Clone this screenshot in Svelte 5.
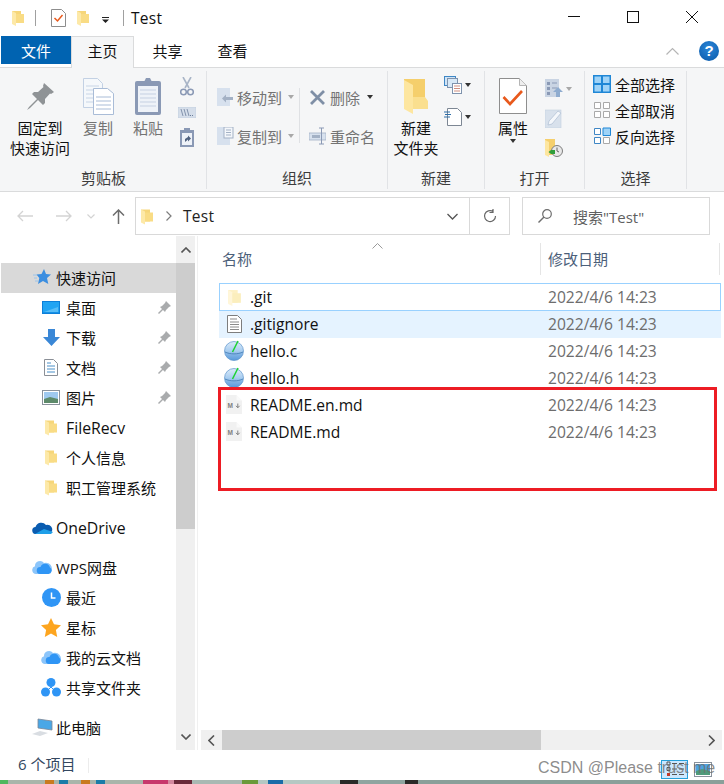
<script>
  const quick = [
    { icon: 'desktop', label: '桌面', pin: true },
    { icon: 'download', label: '下载', pin: true },
    { icon: 'doc', label: '文档', pin: true },
    { icon: 'picture', label: '图片', pin: true },
    { icon: 'folder', label: 'FileRecv', latin: true },
    { icon: 'folder', label: '个人信息' },
    { icon: 'folder', label: '职工管理系统' },
  ]
  const wps = [
    { icon: 'clock', label: '最近' },
    { icon: 'star', label: '星标' },
    { icon: 'wpscloud', label: '我的云文档' },
    { icon: 'share', label: '共享文件夹' },
  ]
  const files = [
    { name: '.git', icon: 'folderpale', cls: 'focused' },
    { name: '.gitignore', icon: 'text', cls: 'hovered' },
    { name: 'hello.c', icon: 'globe' },
    { name: 'hello.h', icon: 'globe' },
    { name: 'README.en.md', icon: 'md' },
    { name: 'README.md', icon: 'md' },
  ]
</script>

{#snippet folder(w, h, pale = false)}
  <svg width={w} height={h} viewBox="0 0 12 16">
    <path d="M0 1h9v12H0z" fill={pale ? '#fdf0c4' : '#f6d67a'} />
    <path d="M0 1l4 2v13l-4-2z" fill={pale ? '#fff6da' : '#fde9a8'} />
    <path d="M4 4h8v9H4z" fill={pale ? '#fbeebd' : '#f9dc85'} />
  </svg>
{/snippet}

{#snippet pinIcon()}
  <svg width="13" height="13" viewBox="0 0 13 13">
    <path d="M8 0l5 5-2 1-3 3-1 2-2-2-4 4-1-1 4-4-2-2 2-1 3-3z" fill="#a9abad" />
  </svg>
{/snippet}

{#snippet icon(name)}
  {#if name === 'folder'}
    {@render folder(12, 17)}
  {:else if name === 'folderpale'}
    {@render folder(13, 17, true)}
  {:else if name === 'star2'}
    <svg width="18" height="18" viewBox="0 0 18 18"><path d="M11 1l2 5 5 .5-4 3.500 1.300 6L10 13l-5 3 1.300-6-2.800-3.500 5-.5z" fill="#3b8ee0" /><path d="M0 7h4M1 10h3M2 13h3" stroke="#9cc4ea" /></svg>
  {:else if name === 'desktop'}
    <svg width="18" height="13" viewBox="0 0 18 13"><rect width="18" height="13" fill="#0c7fd9" /><rect x="1" y="1" width="16" height="10.500" fill="#21a4f3" /><path d="M2 11L16 6v5z" fill="#58bdf7" /></svg>
  {:else if name === 'download'}
    <svg width="17" height="17" viewBox="0 0 17 17"><path d="M5 0h7v8h5l-8.500 9L0 8h5z" fill="#3a87d6" /></svg>
  {:else if name === 'doc'}
    <svg width="14" height="17" viewBox="0 0 14 17"><path d="M.5.500h9l4 4v12H.5z" fill="#fff" stroke="#8a8f96" /><path d="M3 4h4M3 7h8M3 10h8M3 13h8" stroke="#4b90c8" /></svg>
  {:else if name === 'picture'}
    <svg width="18" height="15" viewBox="0 0 18 15"><rect x=".5" y=".5" width="17" height="14" fill="#fff" stroke="#8a929c" /><rect x="2" y="2" width="14" height="11" fill="#9fc9ef" /><path d="M2 9l6-2 8 2v4H2z" fill="#5d8a6a" /></svg>
  {:else if name === 'clock'}
    <svg width="19" height="19" viewBox="0 0 19 19"><circle cx="9.500" cy="9.500" r="9.500" fill="#2f95f5" /><path d="M9.500 4.500v5.500h4" fill="none" stroke="#fff" stroke-width="1.500" /></svg>
  {:else if name === 'star'}
    <svg width="20" height="19" viewBox="0 0 20 19"><path d="M10 0l3 6.300 7 .9-5.100 4.800 1.300 7L10 15.600 3.800 19l1.300-7L0 7.200l7-.9z" fill="#fda51f" /></svg>
  {:else if name === 'wpscloud'}
    <svg width="20" height="14" viewBox="0 0 20 14"><path d="M4 14a4 4 0 0 1-1-7.800A5 5 0 0 1 12 3a4.500 4.500 0 0 1 4 11z" fill="#8cc5fa" /><path d="M8 14a3.500 3.500 0 0 1 .5-7A5 5 0 0 1 18 7.500 3.500 3.500 0 0 1 16.500 14z" fill="#2f95f5" /></svg>
  {:else if name === 'share'}
    <svg width="20" height="19" viewBox="0 0 20 19"><circle cx="10" cy="4.500" r="4.500" fill="#2f95f5" /><circle cx="4.500" cy="14" r="4.500" fill="#2f95f5" /><circle cx="15.500" cy="14" r="4.500" fill="#2f95f5" /><path d="M10 9l-3 3M10 9l3 3" stroke="#2f95f5" /></svg>
  {:else if name === 'text'}
    <svg width="15" height="18" viewBox="0 0 15 18"><path d="M.5.500h10l4 4v13H.5z" fill="#fff" stroke="#7d7d7d" /><path d="M3 4h7M3 7h9M3 9.500h9M3 12h9M3 14.500h9" stroke="#8a8a8a" /></svg>
  {:else if name === 'globe'}
    <svg width="20" height="21" viewBox="0 0 20 21"><defs><linearGradient id="gl" x1="0" y1="0" x2="0" y2="1"><stop offset="0" stop-color="#dcebf9" /><stop offset=".5" stop-color="#a8cdf0" /><stop offset=".7" stop-color="#7fb2e4" /><stop offset="1" stop-color="#5a9adb" /></linearGradient></defs><circle cx="10" cy="11" r="9.500" fill="url(#gl)" stroke="#5b93cb" stroke-width=".7" /><path d="M1 12c5 2.500 13 2.500 18 0" fill="none" stroke="#3f78b3" stroke-width=".8" /><path d="M8.500 12L14 1" stroke="#1ed334" stroke-width="1.600" /></svg>
  {:else if name === 'md'}
    <svg width="16" height="19" viewBox="0 0 16 19"><path d="M0 0h10.500L16 5.500V19H0z" fill="#f1f1f1" /><path d="M10.500 0v5.500H16z" fill="#fafafa" /><text x="1.500" y="13" font-size="6.500" font-weight="700" font-family="Liberation Sans" fill="#808080">M</text><path d="M11.800 8.500v4M10 10.800l1.800 2 1.800-2" fill="none" stroke="#808080" stroke-width="1" /></svg>
  {/if}
{/snippet}

<div class="window">
  <header class="titlebar">
    <span class="qa first">{@render folder(12, 16)}</span>
    <i class="vsep"></i>
    <svg class="qa doccheck" width="15" height="18" viewBox="0 0 15 18"><path d="M.5.500h10l4 4v13H.5z" fill="#fff" stroke="#8d8d8d" /><path d="M3.500 9l3 3 5-6" fill="none" stroke="#e8591c" stroke-width="1.500" /></svg>
    <span class="qa second">{@render folder(12, 16)}</span>
    <svg class="qa more" width="7" height="6" viewBox="0 0 7 6"><path d="M0 0h7v1H0zM0 2.500h7L3.500 6z" fill="#222" /></svg>
    <i class="vsep last"></i>
    <span class="title">Test</span>
    <div class="controls">
      <svg width="12" height="12" viewBox="0 0 12 12"><path d="M0 5.500h12" stroke="#111" /></svg>
      <svg width="12" height="12" viewBox="0 0 12 12"><rect x=".5" y=".5" width="11" height="11" fill="none" stroke="#111" /></svg>
      <svg width="12" height="12" viewBox="0 0 12 12"><path d="M0 0l12 12M12 0L0 12" stroke="#111" /></svg>
    </div>
  </header>

  <nav class="tabs">
    <span class="tab file">文件</span>
    <span class="tab active">主页</span>
    <span class="tab plain">共享</span>
    <span class="tab">查看</span>
    <div class="tabs-right">
      <svg width="13" height="8" viewBox="0 0 13 8"><path d="M.5 7.500l6-6 6 6" fill="none" stroke="#b5b5b5" stroke-width="1.200" /></svg>
      <span class="help">?</span>
    </div>
  </nav>

  <section class="ribbon">
    <div class="group clip">
      <div class="tools">
        <div class="big pinbtn">
          <div class="big-icon">
            <svg width="27" height="27" viewBox="0 0 27 27"><path d="M17 0l10 9-3 2-1-.5-5 5.500 0 4-2 2-5-5-8 8-3 2 2-3 8-8-5-5 2-2h4l5.500-5-.5-1z" fill="#8f9396" /></svg>
          </div>
          <span>固定到</span><span>快速访问</span>
        </div>
        <div class="big copybtn dim">
          <div class="big-icon">
            <svg width="31" height="37" viewBox="0 0 31 37"><path d="M.5.500h14l5 5v24H.5z" fill="#f5f8fb" stroke="#c3d1e4" /><path d="M3 8h13M3 12h13M3 16h13M3 20h13M3 24h13" stroke="#c8d5e6" /><path d="M10.500 10.500h14l6 5v21h-20z" fill="#fff" stroke="#a9bcd7" /><path d="M13 19h15M13 23h15M13 27h15M13 31h15" stroke="#a9bcd7" /></svg>
          </div>
          <span>复制</span>
        </div>
        <div class="big pastebtn dim">
          <div class="big-icon">
            <svg width="27" height="38" viewBox="0 0 27 38"><rect y="4" width="26" height="34" rx="2" fill="#8a99b5" /><rect x="3" y="9" width="20" height="26" fill="#eef2f8" /><path d="M5 13h16M5 17h16M5 21h16M5 25h16M5 29h16" stroke="#c5d0e2" /><path d="M9 5l2-4h4l2 4 2 3H7z" fill="#8a99b5" /></svg>
          </div>
          <span>粘贴</span>
        </div>
        <div class="smallcol">
          <svg width="14" height="19" viewBox="0 0 14 19"><path d="M3 0l6 11M11 0L5 11" stroke="#a9b5c7" stroke-width="1.600" /><circle cx="3.500" cy="15" r="2.800" fill="none" stroke="#8a99b5" stroke-width="1.500" /><circle cx="10.500" cy="15" r="2.800" fill="none" stroke="#8a99b5" stroke-width="1.500" /></svg>
          <svg width="18" height="11" viewBox="0 0 18 11"><rect width="18" height="11" fill="#d5deea" stroke="#b8c5d8" stroke-width=".5" /><path d="M3 2l2 7M6 2l2 7M9 2l2 7" stroke="#6d7f9c" stroke-width=".8" /><path d="M12 8.500h1M14 8.500h1" stroke="#6d7f9c" /></svg>
          <svg width="14" height="19" viewBox="0 0 14 19"><rect y="2" width="14" height="17" fill="#8a99b5" /><rect x="2" y="5" width="10" height="12" fill="#eef2f8" /><path d="M4 0h6v4H4z" fill="#8a99b5" /><path d="M5 14l0-3 3-2v-1.500l3 3-3 3v-2z" fill="#50627f" /></svg>
        </div>
      </div>
      <div class="glabel">剪贴板</div>
    </div>

    <div class="group org">
      <div class="tools">
        <div class="orgcol dim">
          <div class="row">
            <svg width="17" height="18" viewBox="0 0 17 18"><path d="M0 0h13v18H0z" fill="#d7e1ee" /><path d="M16 9H9V6.500L5 10.500l4 4V12h7z" fill="#a3b1c5" /></svg>
            <span>移动到</span><i class="drop grey"></i>
          </div>
          <div class="row">
            <svg width="17" height="18" viewBox="0 0 17 18"><path d="M0 0h13v18H0z" fill="#d7e1ee" /><rect x="7" y="0" width="9" height="11" fill="#f4f7fb" stroke="#a3b1c5" /><path d="M9 3h5M9 5.500h5M9 8h5" stroke="#a3b1c5" /></svg>
            <span>复制到</span><i class="drop grey"></i>
          </div>
        </div>
        <i class="orgsep"></i>
        <div class="orgcol dim second">
          <div class="row">
            <svg width="16" height="15" viewBox="0 0 16 15"><path d="M1.500 1l13 13M14.500 1l-13 13" stroke="#7f8fa6" stroke-width="2.800" /></svg>
            <span>删除</span><i class="drop dark"></i>
          </div>
          <div class="row">
            <svg width="17" height="18" viewBox="0 0 17 18"><rect y="6" width="17" height="7" fill="#d7e1ee" stroke="#a3b1c5" stroke-width=".8" /><rect x="3" y="8" width="8" height="3" fill="#a3b1c5" /><path d="M10 1h5M12.500 1v16M10 17h5" stroke="#8a99b5" /></svg>
            <span>重命名</span>
          </div>
        </div>
      </div>
      <div class="glabel">组织</div>
    </div>

    <div class="group newg">
      <div class="tools">
        <div class="big newbtn">
          <div class="big-icon">
            <svg width="24" height="35" viewBox="0 0 24 35"><path d="M0 0h21v30H0z" fill="#f5cf6c" /><path d="M0 1l9 5v29l-9-5z" fill="#fde6a0" /><path d="M9 18h12l3 4v8H9z" fill="#fadf8f" /></svg>
          </div>
          <span>新建</span><span>文件夹</span>
        </div>
        <div class="smallcol newsmall">
          <div class="withdrop">
            <svg width="18" height="18" viewBox="0 0 18 18"><rect x=".5" y=".5" width="11" height="9" fill="#cfe4f7" stroke="#3f87c5" /><rect x="3.500" y="2.500" width="10" height="9" fill="#d8e9f7" stroke="#7f93ad" /><rect x="8.500" y="7.500" width="9" height="10" fill="#fff" stroke="#7f93ad" /><path d="M10 10h6M10 12.500h6M10 15h6" stroke="#cf8f80" /></svg>
            <i class="drop dark"></i>
          </div>
          <div class="withdrop">
            <svg width="18" height="18" viewBox="0 0 18 18"><path d="M3.500.500h10l4 4v13h-14z" fill="#fff" stroke="#7d8794" /><path d="M0 4h6M1 6.500h6M0 9h6" stroke="#2f6fa8" /></svg>
            <i class="drop dark"></i>
          </div>
        </div>
      </div>
      <div class="glabel">新建</div>
    </div>

    <div class="group open">
      <div class="tools">
        <div class="big propbtn">
          <div class="big-icon">
            <svg width="28" height="36" viewBox="0 0 28 36"><path d="M.5.500h20l7 7v28H.5z" fill="#fff" stroke="#8e8e8e" /><path d="M20.500.500v7h7" fill="#eee" stroke="#b5b5b5" /><path d="M4.500 19l6.500 7 12-13" fill="none" stroke="#e8591c" stroke-width="2.600" /></svg>
          </div>
          <span>属性</span><i class="drop dark"></i>
        </div>
        <div class="smallcol opensmall">
          <div class="withdrop">
            <svg width="18" height="19" viewBox="0 0 18 19"><rect width="14" height="18" fill="#c9d4e3" /><path d="M2 3h3v3H2zM2 8h3v3H2zM2 13h3v3H2z" fill="#8a99b5" /><path d="M7 4h5M7 9h5" stroke="#8a99b5" /><path d="M13 8l5 5h-3v5h-4v-5H8z" fill="#8faccf" /></svg>
            <i class="drop grey"></i>
          </div>
          <svg width="18" height="19" viewBox="0 0 18 19"><rect width="16" height="18" y="1" fill="#d8e1ec" stroke="#c2cfdf" stroke-width=".6" /><path d="M3 16l1-4L13 2l3 2L7 15z" fill="#f4f7fb" stroke="#b4c3d6" stroke-width=".8" /></svg>
          <svg width="18" height="18" viewBox="0 0 18 18"><path d="M0 0h10v16H0z" fill="#f5cf6c" /><path d="M0 1l4 2v15l-4-2z" fill="#fde6a0" /><circle cx="12" cy="12" r="5.500" fill="#e8e8e8" stroke="#7d7d7d" /><path d="M12 8.500V12l2 1" fill="none" stroke="#666" /><path d="M10 11H6l-2.500 2L6 15h4z" fill="#2f9e3b" /></svg>
        </div>
      </div>
      <div class="glabel">打开</div>
    </div>

    <div class="group sel">
      <div class="tools">
        <div class="selcol">
          <div class="selrow">
            <svg width="18" height="18" viewBox="0 0 18 18"><path d="M0 0h18v18H0z" fill="#1f87d6" /><path d="M1.500 1.500h6.500v6.500H1.500zM10 1.500h6.500v6.500H10zM1.500 10h6.500v6.500H1.500zM10 10h6.500v6.500H10z" fill="#9fd3f7" /></svg>
            <span>全部选择</span>
          </div>
          <div class="selrow">
            <svg width="18" height="18" viewBox="0 0 18 18"><path d="M1.500 1.500h6v6h-6zM10.500 1.500h6v6h-6zM1.500 10.500h6v6h-6zM10.500 10.500h6v6h-6z" fill="#fff" stroke="#a9a9a9" /></svg>
            <span>全部取消</span>
          </div>
          <div class="selrow">
            <svg width="18" height="18" viewBox="0 0 18 18"><path d="M1.500 1.500h6v6h-6zM1.500 10.500h6v6h-6z" fill="#fff" stroke="#3f87c5" /><path d="M10 1h7.500v7.500H10z" fill="#9fd3f7" stroke="#1f87d6" /><path d="M10.500 10.500h6v6h-6z" fill="#fff" stroke="#a9a9a9" /></svg>
            <span>反向选择</span>
          </div>
        </div>
      </div>
      <div class="glabel">选择</div>
    </div>
  </section>

  <div class="addressbar">
    <svg class="nav back" width="16" height="12" viewBox="0 0 16 12"><path d="M16 6H1M6 1L1 6l5 5" fill="none" stroke="#d3d3d3" stroke-width="1.300" /></svg>
    <svg class="nav fwd" width="16" height="12" viewBox="0 0 16 12"><path d="M0 6h15M10 1l5 5-5 5" fill="none" stroke="#d3d3d3" stroke-width="1.300" /></svg>
    <svg class="nav down" width="8" height="5" viewBox="0 0 8 5"><path d="M.5.500L4 4 7.500.500" fill="none" stroke="#d3d3d3" stroke-width="1.200" /></svg>
    <svg class="nav up" width="13" height="15" viewBox="0 0 13 15"><path d="M6.500 15V1M1 6.500l5.500-5.500L12 6.500" fill="none" stroke="#6d6d6d" stroke-width="1.500" /></svg>
    <div class="pathbox">
      <span class="pf">{@render folder(12, 17)}</span>
      <svg width="6" height="10" viewBox="0 0 6 10"><path d="M.5.500L5 5 .5 9.500" fill="none" stroke="#7d7d7d" stroke-width="1.200" /></svg>
      <span class="crumb">Test</span>
      <svg class="chev" width="11" height="7" viewBox="0 0 11 7"><path d="M.5 1l5 5 5-5" fill="none" stroke="#555" stroke-width="1.300" /></svg>
      <div class="refresh">
        <svg width="14" height="14" viewBox="0 0 14 14"><path d="M12.500 7A5.500 5.500 0 1 1 10 2.500M10 0v3.500H6.500" fill="none" stroke="#666" stroke-width="1.200" /></svg>
      </div>
    </div>
    <div class="search">
      <svg width="14" height="14" viewBox="0 0 14 14"><circle cx="9" cy="5" r="4.300" fill="none" stroke="#6d6d6d" stroke-width="1.200" /><path d="M6 8l-5.500 5.500" stroke="#6d6d6d" stroke-width="1.400" /></svg>
      <span>搜索"Test"</span>
    </div>
  </div>

  <main class="body">
    <aside class="side">
      <div class="tree">
        <div class="item l1 current">
          <span class="ic">{@render icon('star2')}</span><span>快速访问</span>
        </div>
        {#each quick as q}
          <div class="item l2">
            <span class="ic">{@render icon(q.icon)}</span><span class:latin={q.latin}>{q.label}</span>
            {#if q.pin}<span class="pin">{@render pinIcon()}</span>{/if}
          </div>
        {/each}
        <div class="item l1 gap">
          <span class="ic">
            <svg width="21" height="13" viewBox="0 0 21 13"><path d="M4 13a3.500 3.500 0 0 1-.5-7A6 6 0 0 1 14 4a4.500 4.500 0 0 1 3 9z" fill="#0a5cb0" /><path d="M3 13l9-5 9 3-2 2z" fill="#1f9fe8" /></svg>
          </span><span class="latin">OneDrive</span>
        </div>
        <div class="item l1 gap">
          <span class="ic">{@render icon('wpscloud')}</span><span>WPS网盘</span>
        </div>
        {#each wps as w}
          <div class="item l2">
            <span class="ic">{@render icon(w.icon)}</span><span>{w.label}</span>
          </div>
        {/each}
        <div class="item l1 gap">
          <span class="ic">
            <svg width="21" height="18" viewBox="0 0 21 18"><path d="M6 1l14 2v9L6 10z" fill="#4aa7e6" stroke="#7d8794" stroke-width=".8" /><path d="M0 16l8-3 8 2-8 3z" fill="#d9dde2" /></svg>
          </span><span>此电脑</span>
        </div>
        <div class="item l1 gap peek">
          <span class="ic"><svg width="18" height="16" viewBox="0 0 18 16"><circle cx="9" cy="8" r="7" fill="#6cc4ef" /></svg></span>
        </div>
      </div>
      <div class="vscroll">
        <div class="sbtn"><svg width="10" height="6" viewBox="0 0 10 6"><path d="M.5 5.500L5 1l4.500 4.500" fill="none" stroke="#555" stroke-width="1.600" /></svg></div>
        <div class="vtrack"><div class="vthumb"></div></div>
        <div class="sbtn"><svg width="10" height="6" viewBox="0 0 10 6"><path d="M.5.500L5 5 9.500.500" fill="none" stroke="#555" stroke-width="1.600" /></svg></div>
      </div>
    </aside>

    <section class="list">
      <div class="listhead">
        <svg class="sort" width="11" height="6" viewBox="0 0 11 6"><path d="M.5 5.500l5-5 5 5" fill="none" stroke="#9a9a9a" /></svg>
        <span class="hname">名称</span>
        <span class="hdate">修改日期</span>
      </div>
      <div class="rows">
        {#each files as f}
          <div class="frow {f.cls ?? ''}">
            <span class="fic">{@render icon(f.icon)}</span>
            <span class="fname">{f.name}</span>
            <span class="fdate">2022/4/6 14:23</span>
          </div>
        {/each}
      </div>
      <div class="hscroll">
        <div class="hbtn"><svg width="7" height="11" viewBox="0 0 7 11"><path d="M6 .5L1 5.500l5 5" fill="none" stroke="#555" stroke-width="1.600" /></svg></div>
        <div class="hthumb"></div>
        <div class="hbtn right"><svg width="7" height="11" viewBox="0 0 7 11"><path d="M1 .5l5 5-5 5" fill="none" stroke="#555" stroke-width="1.600" /></svg></div>
      </div>
    </section>
  </main>

  <footer class="status">
    <span class="count">6 个项目</span>
    <i class="statsep"></i>
    <div class="views">
      <div class="view on">
        <svg width="18" height="16" viewBox="0 0 18 16"><path d="M1 1h3v3H1zM1 6.500h3v3H1z" fill="none" stroke="#555" /><rect x="1" y="12" width="3" height="3" fill="#c0392b" /><path d="M6 2.500h5M13 2.500h5M6 8h5M13 8h5M6 13.500h5M13 13.500h5" stroke="#555" /></svg>
      </div>
      <div class="view">
        <svg width="18" height="15" viewBox="0 0 18 15"><rect x=".5" y=".5" width="17" height="14" fill="#fff" stroke="#8a929c" /><rect x="2" y="2" width="14" height="11" fill="#4da3e0" /><path d="M2 9l6-2 8 2v4H2z" fill="#4f9a7a" /></svg>
      </div>
    </div>
  </footer>
  <div class="desktop"></div>

  <div class="annotation"></div>
  <div class="watermark">CSDN @Please trust me</div>
</div>

<style>
  :global(body) {
    margin: 0;
    background: #fff;
  }

  .window {
    position: relative;
    width: 724px;
    height: 784px;
    overflow: hidden;
    background: #fff;
    font-family: "Open Sans", "Noto Sans CJK SC", sans-serif;
    font-size: 15px;
    color: #111;
    display: flex;
    flex-direction: column;
  }
  .latin { font-size: 15.8px; margin-top: 2px; }

  /* title bar */
  .titlebar {
    height: 36px;
    display: flex;
    align-items: center;
    flex: none;
  }
  .qa {
    display: flex;
    flex: none;
  }
  .first { margin-left: 12px; }
  .vsep {
    width: 1px;
    height: 16px;
    background: #a0a0a0;
    margin-left: 11px;
  }
  .vsep.last { margin-left: 14px; }
  .doccheck { margin-left: 15px; }
  .second { margin-left: 11px; }
  .more { margin-left: 13px; margin-top: 3px; }
  .title {
    margin-left: 7px;
    margin-top: -1px;
    font-size: 15.5px;
    letter-spacing: 0.3px;
  }
  .controls {
    margin-left: auto;
    margin-right: 26px;
    display: flex;
    gap: 47px;
    margin-top: -3px;
  }

  /* tabs */
  .tabs {
    height: 32px;
    flex: none;
    display: flex;
    box-sizing: border-box;
    border-bottom: 1px solid #dadbdc;
    padding-left: 1px;
    align-items: flex-start;
  }
  .tab {
    width: 65px;
    height: 28px;
    line-height: 30px;
    text-align: center;
  }
  .tab.plain { margin-left: 1px; }
  .tab.file {
    width: 70px;
    background: #0063b1;
    color: #fff;
  }
  .tab.active {
    width: 63px;
    height: 32px;
    box-sizing: border-box;
    background: #f5f6f7;
    border: 1px solid #dadbdc;
    border-bottom: none;
    position: relative;
    z-index: 1;
    line-height: 29px;
  }
  .tabs-right {
    margin-left: auto;
    margin-right: 5px;
    display: flex;
    align-items: center;
    gap: 20px;
    height: 30px;
  }
  .help {
    width: 20px;
    height: 20px;
    border-radius: 50%;
    background: radial-gradient(circle at 50% 35%, #2a86d8, #0a58a8);
    color: #fff;
    font: 700 15px/20px "Liberation Sans", sans-serif;
    text-align: center;
  }

  /* ribbon */
  .ribbon {
    height: 124px;
    flex: none;
    box-sizing: border-box;
    background: #f5f6f7;
    border-bottom: 1px solid #dadbdc;
    display: flex;
    padding: 3px 0 0 1px;
  }
  .group {
    display: flex;
    flex-direction: column;
    box-sizing: border-box;
    border-right: 1px solid #e1e3e6;
    height: 118px;
  }
  .clip { width: 206px; }
  .org { width: 181px; }
  .newg { width: 97px; }
  .open { width: 100px; }
  .sel { width: 102px; }
  .tools {
    flex: 1;
    display: flex;
    min-height: 0;
  }
  .glabel {
    height: 20px;
    text-align: center;
    color: #3c3c3c;
    line-height: 18px;
  }
  .big {
    display: flex;
    flex-direction: column;
    align-items: center;
    line-height: 20px;
    padding-top: 3px;
    flex: none;
  }
  .big-icon {
    height: 44px;
    display: flex;
    align-items: center;
    justify-content: center;
  }
  .dim, .dim span { color: #737373; }
  .pinbtn { width: 64px; margin-left: 7px; }
  .copybtn { width: 50px; margin-left: 1px; }
  .pastebtn { width: 50px; }
  .smallcol {
    display: flex;
    flex-direction: column;
    align-items: center;
    justify-content: space-between;
    flex: none;
  }
  .clip .smallcol {
    width: 18px;
    margin-left: 5px;
    padding-top: 6px;
    height: 70px;
  }
  .orgcol {
    display: flex;
    flex-direction: column;
    padding-top: 16px;
    gap: 19px;
    margin-left: 10px;
    width: 84px;
  }
  .row {
    height: 20px;
    display: flex;
    align-items: center;
    gap: 3px;
    white-space: nowrap;
  }
  .orgcol.second { margin-left: 9px; }
  .orgcol.second .row { gap: 4px; }
  .orgcol.second .row svg { flex: none; width: 17px; }
  .orgsep {
    width: 1px;
    height: 55px;
    margin-top: 17px;
    margin-left: 4px;
    background: #dfe1e4;
  }
  .drop {
    display: block;
    width: 0;
    height: 0;
    border-left: 3.500px solid transparent;
    border-right: 3.500px solid transparent;
    border-top: 4px solid #a8a8a8;
    margin-left: 3px;
  }
  .drop.dark { border-top-color: #333; }

  .newbtn { width: 56px; }
  .newsmall {
    margin-left: 0;
    padding-top: 5px;
    height: 50px;
  }
  .withdrop {
    display: flex;
    align-items: center;
    gap: 0;
  }
  .propbtn { width: 56px; }
  .propbtn .drop { margin: 1px 0 0; }
  .opensmall {
    margin-left: 4px;
    width: 30px;
    align-items: flex-start;
    padding-top: 8px;
    height: 78px;
  }
  .selcol {
    display: flex;
    flex-direction: column;
    gap: 8px;
    padding: 4px 0 0 8px;
  }
  .selrow {
    height: 18px;
    display: flex;
    align-items: center;
    gap: 4px;
    white-space: nowrap;
  }

  /* address bar */
  .addressbar {
    height: 44px;
    flex: none;
    display: flex;
    align-items: center;
    box-sizing: border-box;
    padding-top: 4px;
  }
  .nav { flex: none; }
  .back { margin-left: 17px; }
  .fwd { margin-left: 23px; }
  .down { margin-left: 15px; }
  .up { margin-left: 17px; }
  .pathbox {
    margin-left: 10px;
    width: 375px;
    height: 38px;
    box-sizing: border-box;
    border: 1px solid #d9d9d9;
    display: flex;
    align-items: center;
  }
  .pf { display: flex; margin-left: 5px; margin-right: 13px; }
  .crumb {
    margin-left: 11px;
    font-size: 15.5px;
    letter-spacing: 0.3px;
    color: #222;
  }
  .chev { margin-left: auto; margin-right: 11px; }
  .refresh {
    width: 39px;
    height: 36px;
    border-left: 1px solid #d9d9d9;
    display: flex;
    align-items: center;
    justify-content: center;
  }
  .search {
    margin-left: 12px;
    width: 188px;
    height: 38px;
    box-sizing: border-box;
    border: 1px solid #d9d9d9;
    display: flex;
    align-items: center;
    padding-left: 15px;
    gap: 21px;
    color: #5f5f5f;
  }

  /* main */
  .body {
    height: 514px;
    flex: none;
    display: flex;
  }
  .side {
    width: 198px;
    flex: none;
    display: flex;
    box-sizing: border-box;
    border-right: 1px solid #f0f0f0;
    margin-right: 3px;
  }
  .tree {
    width: 176px;
    flex: none;
    overflow: hidden;
    padding-top: 27px;
    box-sizing: border-box;
    height: 514px;
  }
  .item {
    height: 30px;
    display: flex;
    align-items: center;
    white-space: nowrap;
    position: relative;
    box-sizing: border-box;
    padding-bottom: 2px;
  }
  .item .ic {
    width: 22px;
    display: flex;
    justify-content: center;
    flex: none;
    margin-right: 3px;
  }
  .l1 { padding-left: 31px; }
  .l2 { padding-left: 40px; }
  .l2 .ic { margin-right: 4px; }
  .l1.gap { margin-top: 10px; }
  .peek { align-items: flex-start; padding-top: 4px; }
  .current {
    background: #d9d9d9;
    margin-left: 1px;
    padding-left: 30px;
  }
  .pin {
    position: absolute;
    left: 158px;
    top: 8px;
    display: flex;
  }
  .vscroll {
    width: 19px;
    flex: none;
    margin-right: 2px;
    display: flex;
    flex-direction: column;
    background: #f0f0f0;
  }
  .sbtn {
    height: 27px;
    display: flex;
    align-items: center;
    justify-content: center;
    flex: none;
  }
  .vtrack { flex: 1; }
  .vthumb {
    height: 266px;
    background: #cdcdcd;
  }

  .list {
    flex: 1;
    min-width: 0;
    display: flex;
    flex-direction: column;
  }
  .listhead {
    height: 47px;
    flex: none;
    position: relative;
    display: flex;
    color: #4c607a;
    box-sizing: border-box;
    padding-left: 21px;
  }
  .listhead::after {
    content: "";
    position: absolute;
    left: 518px;
    top: 7px;
    width: 1px;
    height: 32px;
    background: #e5e5e5;
  }
  .hname {
    width: 318px;
    line-height: 46px;
    flex: none;
  }
  .sort {
    position: absolute;
    left: 171px;
    top: 7px;
  }
  .hdate {
    border-left: 1px solid #e5e5e5;
    height: 32px;
    margin-top: 7px;
    line-height: 32px;
    padding-left: 7px;
  }
  .rows {
    flex: 1;
    padding-left: 18px;
    min-height: 0;
  }
  .frow {
    width: 502px;
    height: 27px;
    display: flex;
    align-items: center;
    box-sizing: border-box;
    border: 1px solid transparent;
    padding-bottom: 2px;
  }
  .frow.focused {
    border-color: #99d1ff;
    height: 28px;
    padding-bottom: 0;
  }
  .frow.hovered { background: #e5f3ff; border-color: #e5f3ff; }
  .fic {
    width: 28px;
    margin-right: 2px;
    display: flex;
    justify-content: center;
    flex: none;
  }
  .fname {
    width: 298px;
    flex: none;
    white-space: nowrap;
    color: #111;
    font-size: 15.6px;
  }
  .fdate {
    color: #6d6d6d;
    font-size: 15.6px;
    white-space: nowrap;
  }
  .hscroll {
    height: 20px;
    flex: none;
    display: flex;
    background: #f0f0f0;
    width: 521px;
  }
  .hbtn {
    width: 21px;
    display: flex;
    align-items: center;
    justify-content: center;
    flex: none;
  }
  .hbtn.right { margin-left: auto; }
  .hthumb {
    width: 319px;
    background: #cdcdcd;
  }

  /* status */
  .status {
    height: 30px;
    flex: none;
    display: flex;
    align-items: center;
    color: #33475f;
    padding-left: 18px;
    box-sizing: border-box;
  }
  .count { width: 70px; margin-top: -3px; }
  .statsep {
    width: 1px;
    height: 15px;
    background: #ececec;
  }
  .views {
    margin-left: auto;
    margin-right: 12px;
    display: flex;
    align-items: center;
    gap: 6px;
    padding-top: 8px;
  }
  .view {
    width: 18px;
    height: 19px;
    display: flex;
    align-items: center;
    justify-content: center;
  }
  .view.on {
    width: 27px;
    box-sizing: border-box;
    background: #cce8ff;
    border: 1px solid #26a0da;
  }
  .desktop {
    flex: 1;
    background: linear-gradient(90deg, #4fb85f 0 8px, #a9b5aa 8px 45px, #c97a1f 45px 54px, #a9b5aa 54px 59px, #1a7ca8 59px 68px, #a9b5aa 68px 81px, #c97a1f 81px 90px, #a9b5aa 90px 96px, #1a7ca8 96px 105px, #a9b5aa 105px 143px, #c8386c 143px 168px, #d58aa0 168px 174px, #6a2a3a 174px 192px, #a9b9b3 192px 242px, #6a9a3a 242px 258px, #b5c8c3 258px 268px, #1a6ca8 268px 283px, #b5c8c3 283px 340px, #2a2a28 340px 358px, #8fa5a0 358px 405px, #2a2a28 405px 418px, #8aa09a 418px 724px);
  }

  /* overlays */
  .annotation {
    position: absolute;
    left: 218px;
    top: 387px;
    width: 499px;
    height: 104px;
    box-sizing: border-box;
    border: 3px solid #ed1c24;
  }
  .watermark {
    position: absolute;
    left: 538px;
    top: 759px;
    font: 16px/18px "Liberation Sans", sans-serif;
    color: rgba(110, 110, 110, 0.8);
    white-space: nowrap;
  }
</style>
